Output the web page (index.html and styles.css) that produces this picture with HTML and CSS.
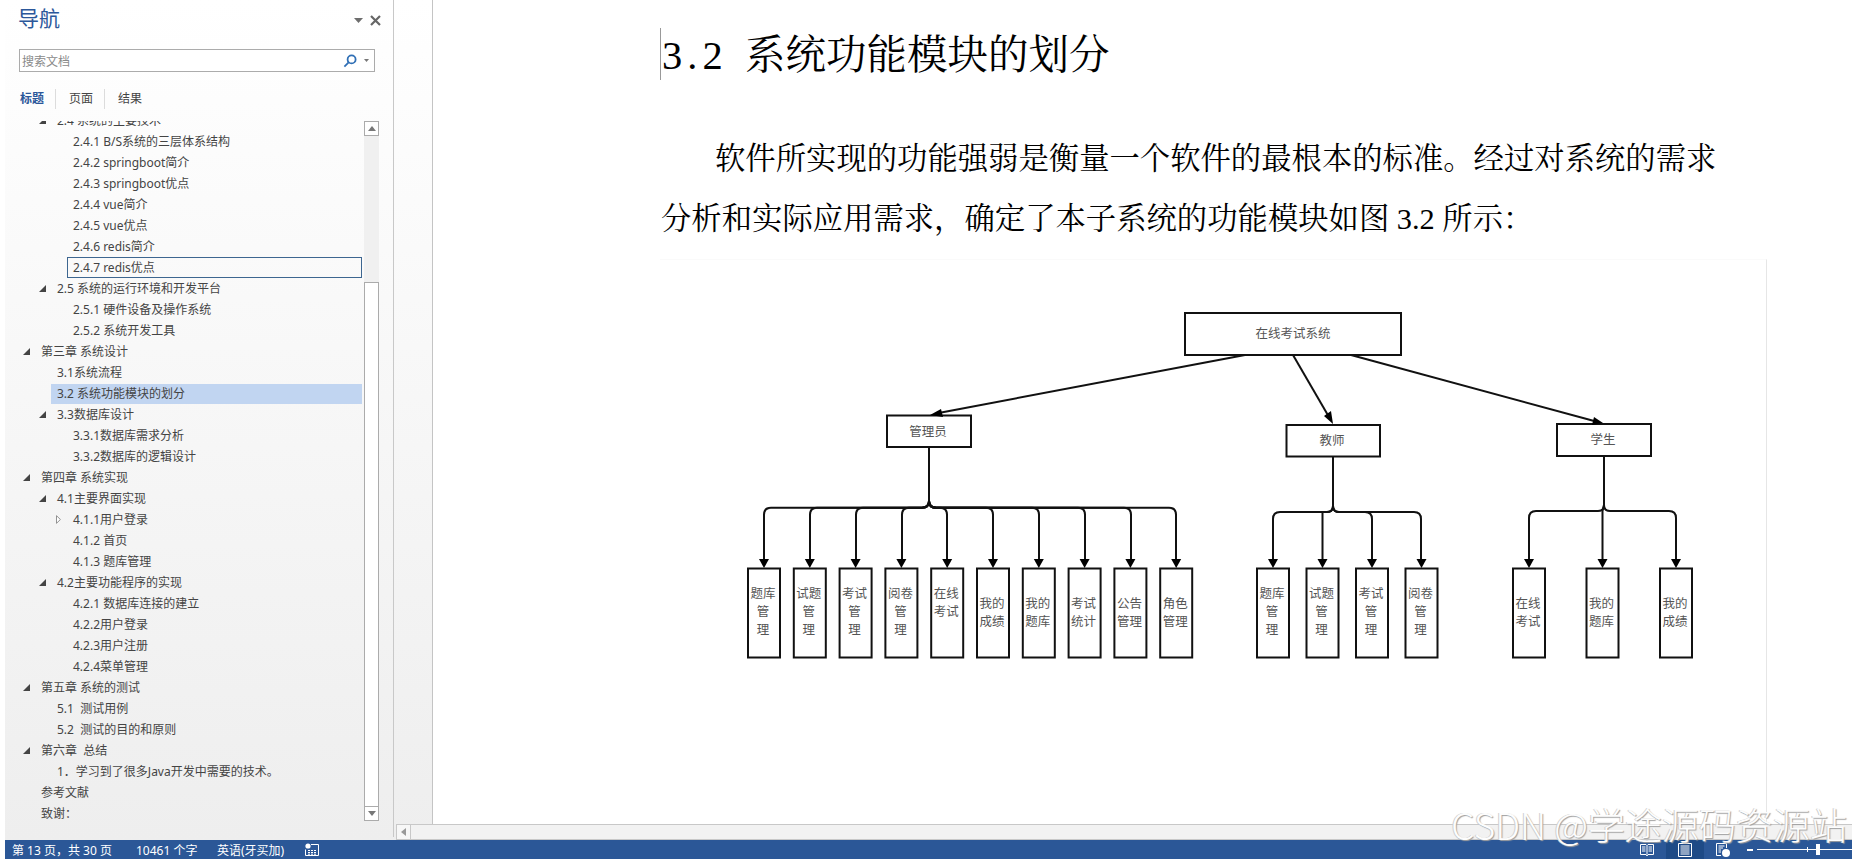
FILE: index.html
```html
<!DOCTYPE html>
<html lang="zh-CN">
<head>
<meta charset="utf-8">
<title>在线考试系统 - 文档</title>
<link rel="stylesheet" href="styles.css">
</head>
<body>
<div class="app">
  <div class="main">
    <aside class="nav">
      <header class="nav-head">
        <h2 class="nav-title">导航</h2>
        <div class="nav-actions">
          <svg class="ico-drop" viewBox="0 0 9 5"><path d="M0 0H9L4.5 5Z"/></svg>
          <svg class="ico-close" viewBox="0 0 11 11"><path d="M1 1L10 10M10 1L1 10"/></svg>
        </div>
      </header>
      <div class="search">
        <span class="search-text">搜索文档</span>
        <svg class="ico-search" viewBox="0 0 14 14"><circle cx="8.6" cy="5.4" r="4"/><path d="M5.6 8.4L1.4 12.6"/></svg>
        <svg class="ico-mini" viewBox="0 0 5 3"><path d="M0 0H5L2.5 3Z"/></svg>
      </div>
      <nav class="tabs">
        <span class="tab tab-on">标题</span>
        <span class="tab">页面</span>
        <span class="tab">结果</span>
      </nav>
      <div class="tree-area">
        <div class="tree">
          <div class="tree-list">
            <div class="row l2"><i class="tw open"></i><span class="label">2.4 系统的主要技术</span></div>
            <div class="row l3"><i class="tw"></i><span class="label">2.4.1 B/S系统的三层体系结构</span></div>
            <div class="row l3"><i class="tw"></i><span class="label">2.4.2 springboot简介</span></div>
            <div class="row l3"><i class="tw"></i><span class="label">2.4.3 springboot优点</span></div>
            <div class="row l3"><i class="tw"></i><span class="label">2.4.4 vue简介</span></div>
            <div class="row l3"><i class="tw"></i><span class="label">2.4.5 vue优点</span></div>
            <div class="row l3"><i class="tw"></i><span class="label">2.4.6 redis简介</span></div>
            <div class="row l3"><i class="tw"></i><span class="label focus">2.4.7 redis优点</span></div>
            <div class="row l2"><i class="tw open"></i><span class="label">2.5 系统的运行环境和开发平台</span></div>
            <div class="row l3"><i class="tw"></i><span class="label">2.5.1 硬件设备及操作系统</span></div>
            <div class="row l3"><i class="tw"></i><span class="label">2.5.2 系统开发工具</span></div>
            <div class="row l1"><i class="tw open"></i><span class="label">第三章 系统设计</span></div>
            <div class="row l2"><i class="tw"></i><span class="label">3.1系统流程</span></div>
            <div class="row l2"><i class="tw"></i><span class="label selected">3.2 系统功能模块的划分</span></div>
            <div class="row l2"><i class="tw open"></i><span class="label">3.3数据库设计</span></div>
            <div class="row l3"><i class="tw"></i><span class="label">3.3.1数据库需求分析</span></div>
            <div class="row l3"><i class="tw"></i><span class="label">3.3.2数据库的逻辑设计</span></div>
            <div class="row l1"><i class="tw open"></i><span class="label">第四章 系统实现</span></div>
            <div class="row l2"><i class="tw open"></i><span class="label">4.1主要界面实现</span></div>
            <div class="row l3"><svg class="tw-closed" viewBox="0 0 5 9"><path d="M.5 .7L4.4 4.5L.5 8.3Z"/></svg><span class="label">4.1.1用户登录</span></div>
            <div class="row l3"><i class="tw"></i><span class="label">4.1.2 首页</span></div>
            <div class="row l3"><i class="tw"></i><span class="label">4.1.3 题库管理</span></div>
            <div class="row l2"><i class="tw open"></i><span class="label">4.2主要功能程序的实现</span></div>
            <div class="row l3"><i class="tw"></i><span class="label">4.2.1 数据库连接的建立</span></div>
            <div class="row l3"><i class="tw"></i><span class="label">4.2.2用户登录</span></div>
            <div class="row l3"><i class="tw"></i><span class="label">4.2.3用户注册</span></div>
            <div class="row l3"><i class="tw"></i><span class="label">4.2.4菜单管理</span></div>
            <div class="row l1"><i class="tw open"></i><span class="label">第五章 系统的测试</span></div>
            <div class="row l2"><i class="tw"></i><span class="label">5.1&nbsp;&nbsp;测试用例</span></div>
            <div class="row l2"><i class="tw"></i><span class="label">5.2&nbsp;&nbsp;测试的目的和原则</span></div>
            <div class="row l1"><i class="tw open"></i><span class="label">第六章&nbsp;&nbsp;总结</span></div>
            <div class="row l2"><i class="tw"></i><span class="label">1．学习到了很多Java开发中需要的技术。</span></div>
            <div class="row l1"><i class="tw"></i><span class="label">参考文献</span></div>
            <div class="row l1"><i class="tw"></i><span class="label">致谢：</span></div>
          </div>
        </div>
        <div class="vscroll">
          <div class="sb-btn"><svg class="sb-arrow" viewBox="0 0 8 5"><path d="M0 5L4 0L8 5Z"/></svg></div>
          <div class="sb-track"></div>
          <div class="sb-thumb"></div>
          <div class="sb-btn"><svg class="sb-arrow" viewBox="0 0 8 5"><path d="M0 0L4 5L8 0Z"/></svg></div>
        </div>
      </div>
    </aside>
    <section class="workspace">
      <div class="doc-row">
        <div class="gutter"></div>
        <main class="page">
          <h1 class="doc-h"><span class="doc-num">3.2</span>系统功能模块的划分</h1>
          <p class="doc-p">软件所实现的功能强弱是衡量一个软件的最根本的标准。经过对系统的需求分析和实际应用需求，确定了本子系统的功能模块如图 3.2 所示：</p>
          <figure class="figure">
            <svg class="chart" viewBox="720 300 1000 380">
              <g class="box">
                <rect x="1185" y="312" width="216" height="42"/>
                <rect x="887" y="414.5" width="84" height="31.5"/>
                <rect x="1286.5" y="424" width="93.5" height="31.5"/>
                <rect x="1557" y="423" width="94" height="32"/>
                <rect x="748" y="567.5" width="32" height="89"/><rect x="793.8" y="567.5" width="32" height="89"/><rect x="839.6" y="567.5" width="32" height="89"/><rect x="885.4" y="567.5" width="32" height="89"/><rect x="931.2" y="567.5" width="32" height="89"/><rect x="977" y="567.5" width="32" height="89"/><rect x="1022.8" y="567.5" width="32" height="89"/><rect x="1068.6" y="567.5" width="32" height="89"/><rect x="1114.4" y="567.5" width="32" height="89"/><rect x="1160.2" y="567.5" width="32" height="89"/>
                <rect x="1257" y="567.5" width="32" height="89"/><rect x="1306.5" y="567.5" width="32" height="89"/><rect x="1356" y="567.5" width="32" height="89"/><rect x="1405.5" y="567.5" width="32" height="89"/>
                <rect x="1513" y="567.5" width="32" height="89"/><rect x="1586.5" y="567.5" width="32" height="89"/><rect x="1660" y="567.5" width="32" height="89"/>
              </g>
              <g class="link">
                <path d="M1245 354L936 412.5"/>
                <path d="M1293 354L1329 416"/>
                <path d="M1351 354L1596 420.5"/>
                <path d="M929 446V500q0 6.7 -7 6.7H771q-7 0 -7 7V559"/>
                <path d="M929 500q0 6.7 -7 6.7H817q-7 0 -7 7V559"/>
                <path d="M929 500q0 6.7 -7 6.7H863q-7 0 -7 7V559"/>
                <path d="M929 500q0 6.7 -7 6.7H909q-7 0 -7 7V559"/>
                <path d="M929 500q0 6.7 7 6.7H940q7 0 7 7V559"/>
                <path d="M929 500q0 6.7 7 6.7H986q7 0 7 7V559"/>
                <path d="M929 500q0 6.7 7 6.7H1032q7 0 7 7V559"/>
                <path d="M929 500q0 6.7 7 6.7H1078q7 0 7 7V559"/>
                <path d="M929 500q0 6.7 7 6.7H1124q7 0 7 7V559"/>
                <path d="M929 500q0 6.7 7 6.7H1169q7 0 7 7V559"/>
                <path d="M1333 455V505q0 6 -6 6H1280q-7 0 -7 7V559"/>
                <path d="M1333 505q0 6 -6 6H1322.5V559"/>
                <path d="M1333 505q0 6 6 6H1365q7 0 7 7V559"/>
                <path d="M1333 505q0 6 6 6H1414q7 0 7 7V559"/>
                <path d="M1604 455V504q0 6 -6 6H1536q-7 0 -7 7V559"/>
                <path d="M1604 504q-1.500 6 -1.500 6V559"/>
                <path d="M1604 504q0 6 6 6H1669q7 0 7 7V559"/>
              </g>
              <g class="head">
                <path d="M930 414L941 408L943 416Z"/>
                <path d="M1333 423L1324 415L1331 410Z"/>
                <path d="M1603 422L1594 416L1592 424Z"/>
                <path d="M764 567L759 558H769Z"/><path d="M809.800 567L804.800 558H814.800Z"/><path d="M855.600 567L850.600 558H860.600Z"/><path d="M901.400 567L896.400 558H906.400Z"/><path d="M947.200 567L942.200 558H952.200Z"/><path d="M993 567L988 558H998Z"/><path d="M1038.800 567L1033.800 558H1043.800Z"/><path d="M1084.600 567L1079.600 558H1089.600Z"/><path d="M1130.400 567L1125.400 558H1135.400Z"/><path d="M1176.200 567L1171.200 558H1181.200Z"/>
                <path d="M1273 567L1268 558H1278Z"/><path d="M1322.500 567L1317.500 558H1327.500Z"/><path d="M1372 567L1367 558H1377Z"/><path d="M1421.500 567L1416.500 558H1426.500Z"/>
                <path d="M1529 567L1524 558H1534Z"/><path d="M1602.500 567L1597.500 558H1607.500Z"/><path d="M1676 567L1671 558H1681Z"/>
              </g>
              <g class="node-text">
                <text x="1293" y="337">在线考试系统</text>
                <text x="928" y="434.500">管理员</text>
                <text x="1332" y="444">教师</text>
                <text x="1603" y="443">学生</text>
                <text x="763" y="597">题库</text><text x="763" y="615">管</text><text x="763" y="633">理</text>
                <text x="808.800" y="597">试题</text><text x="808.800" y="615">管</text><text x="808.800" y="633">理</text>
                <text x="854.600" y="597">考试</text><text x="854.600" y="615">管</text><text x="854.600" y="633">理</text>
                <text x="900.400" y="597">阅卷</text><text x="900.400" y="615">管</text><text x="900.400" y="633">理</text>
                <text x="946.200" y="597">在线</text><text x="946.200" y="615">考试</text>
                <text x="992" y="607">我的</text><text x="992" y="625">成绩</text>
                <text x="1037.800" y="607">我的</text><text x="1037.800" y="625">题库</text>
                <text x="1083.600" y="607">考试</text><text x="1083.600" y="625">统计</text>
                <text x="1129.400" y="607">公告</text><text x="1129.400" y="625">管理</text>
                <text x="1175.200" y="607">角色</text><text x="1175.200" y="625">管理</text>
                <text x="1272" y="597">题库</text><text x="1272" y="615">管</text><text x="1272" y="633">理</text>
                <text x="1321.500" y="597">试题</text><text x="1321.500" y="615">管</text><text x="1321.500" y="633">理</text>
                <text x="1371" y="597">考试</text><text x="1371" y="615">管</text><text x="1371" y="633">理</text>
                <text x="1420.500" y="597">阅卷</text><text x="1420.500" y="615">管</text><text x="1420.500" y="633">理</text>
                <text x="1528" y="607">在线</text><text x="1528" y="625">考试</text>
                <text x="1601.500" y="607">我的</text><text x="1601.500" y="625">题库</text>
                <text x="1675" y="607">我的</text><text x="1675" y="625">成绩</text>
              </g>
            </svg>
          </figure>
        </main>
      </div>
      <div class="hscroll">
        <div class="hs-btn"><svg class="hs-arrow" viewBox="0 0 5 8"><path d="M5 0L0 4L5 8Z"/></svg></div>
        <div class="hs-track"></div>
      </div>
    </section>
  </div>
  <footer class="status">
    <span class="st-item st-page">第 13 页，共 30 页</span>
    <span class="st-item st-words">10461 个字</span>
    <span class="st-item st-lang">英语(牙买加)</span>
    <svg class="st-macro" viewBox="0 0 14 13"><circle cx="3" cy="3" r="2.600" class="fill"/><path d="M6 1.500H13.500V12.500H.5V6.500" class="line"/><path d="M3 7.500H5M6 7.500H8M9 7.500H11M3 9.500H5M6 9.500H8M9 9.500H11M3 11.200H5M6 11.200H8M9 11.200H11" class="line"/></svg>
    <div class="st-right">
      <div class="view"><svg class="view-ico" viewBox="0 0 14 14"><path d="M.5 1.500H6L7 2.500L8 1.500H13.500V11.500H8L7 13L6 11.500H.5ZM7 2.500V11.500M2 4H5.500M2 6H5.500M2 8H5.500M8.500 4H12M8.500 6H12M8.500 8H12" class="line"/></svg></div>
      <div class="view view-on"><svg class="view-ico" viewBox="0 0 14 14"><path d="M.5 .5H13.500V13.500H.5ZM2.500 3H11.500M2.500 5H11.500M2.500 7H11.500M2.500 9H11.500M2.500 11H11.500" class="line"/></svg></div>
      <div class="view"><svg class="view-ico" viewBox="0 0 14 14"><path d="M.5 12.500V.5H10.500V5M2.500 3H8.500M2.500 5H7M2.500 7H5M2.500 9H5M.5 12.500H5" class="line"/><circle cx="10" cy="10" r="4" class="fill"/></svg></div>
      <div class="zoomer">
        <span class="z-minus"></span>
        <div class="z-line"><span class="z-tick"></span><span class="z-thumb"></span></div>
      </div>
    </div>
  </footer>
  <div class="watermark">CSDN @学途源码资源站</div>
</div>
</body>
</html>
```
FILE: styles.css
```css
* { box-sizing: border-box; }
html, body { margin: 0; padding: 0; height: 100%; overflow: hidden; background: #fff; }
body { font-family: "Noto Sans", "Noto Sans CJK SC", sans-serif; font-size: 12px; color: #444; }

.app { position: relative; width: 1852px; height: 859px; padding-left: 5px; display: flex; flex-direction: column; background: #fff; }
.main { flex: 1; min-height: 0; display: flex; background: linear-gradient(180deg, #fff 0, #fdfdfd 12%, #eee 100%); }

/* navigation pane */
.nav { width: 389px; display: flex; flex-direction: column; border-right: 1px solid #c8c8c8; margin-bottom: 3px; }
.nav-head { height: 49px; display: flex; justify-content: space-between; padding: 4px 12px 0 13px; }
.nav-title { margin: 0; font-size: 21px; line-height: 26px; font-weight: 400; color: #2b579a; font-family: "Noto Sans CJK SC", sans-serif; }
.nav-actions { display: flex; gap: 7px; align-items: flex-start; padding-top: 11px; }
.ico-drop { width: 9px; height: 5px; margin-top: 3px; fill: #6d6d6d; }
.ico-close { width: 11px; height: 11px; fill: none; stroke: #666; stroke-width: 2.200; }

.search { margin-left: 14px; width: 356px; height: 23px; border: 1px solid #ababab; background: #fff; display: flex; align-items: center; padding: 0 5px 0 2px; }
.search-text { flex: 1; color: #8a8a8a; font-size: 12px; }
.ico-search { width: 14px; height: 14px; fill: none; stroke: #2f6fb5; stroke-width: 1.800; margin-right: 7px; }
.ico-mini { width: 5px; height: 3px; fill: #777; }

.tabs { height: 49px; padding: 17px 0 0 15px; display: flex; }
.tab { height: 20px; line-height: 20px; padding: 0 11px 0 13px; border-left: 1px solid #dcdcdc; color: #444; font-size: 12px; }
.tab-on { border-left: 0; padding-left: 0; color: #2b579a; font-weight: 700; }

.tree-area { flex: 1; min-height: 0; display: flex; position: relative; }
.tree { width: 359px; overflow: hidden; }
.tree-list { margin-top: -11px; }
.row { height: 21px; display: flex; align-items: center; margin-right: 2px; }
.l1 { padding-left: 18px; }
.l2 { padding-left: 34px; }
.l3 { padding-left: 50px; }
.tw { width: 12px; flex: none; height: 7px; }
.tw.open { background: #444; clip-path: polygon(100% 0, 100% 100%, 0 100%); width: 7px; margin-right: 5px; }
.tw-closed { width: 5px; height: 9px; margin: 0 6px 0 1px; flex: none; fill: #fff; stroke: #777; stroke-width: .8; }
.label { flex: 1; height: 20px; line-height: 20px; padding-left: 6px; white-space: nowrap; color: #444; }
.l2 .selected { margin-left: 0; background: #c1d5f1; }
.focus { height: 21px; line-height: 19px; border: 1px solid #3d6690; padding-left: 5px; }

.vscroll { width: 15px; height: 700px; display: flex; flex-direction: column; }
.sb-btn { height: 15px; background: #fff; border: 1px solid #ababab; display: flex; align-items: center; justify-content: center; }
.sb-arrow { width: 8px; height: 5px; fill: #777; }
.sb-track { height: 146px; background: #f0f0f0; }
.sb-thumb { flex: 1; background: #fff; border: 1px solid #ababab; border-bottom: 0; }

/* document area */
.workspace { flex: 1; min-width: 0; display: flex; flex-direction: column; }
.doc-row { flex: 1; min-height: 0; display: flex; }
.gutter { width: 39px; border-right: 1px solid #c4c4c4; flex: none; }
.page { flex: 1; min-width: 0; background: #fff; padding: 28px 0 0 227px; overflow: hidden; }
.doc-h { margin: 0; height: 52px; line-height: 56px; font-size: 40.500px; font-weight: 400; color: #000; border-left: 1px solid #999; font-family: "Liberation Serif", "Noto Serif CJK SC", "Noto Sans CJK SC", serif; white-space: nowrap; }
.doc-num { display: inline-block; width: 84px; padding-left: 1px; letter-spacing: 5px; }
.doc-p { margin: 49px 0 0 1px; width: 1066px; line-height: 60px; font-size: 30.350px; text-indent: 54px; color: #000; font-family: "Liberation Serif", "Noto Serif CJK SC", "Noto Sans CJK SC", serif; }
.figure { margin: 10px 0 0 0; width: 1107px; height: 570px; padding: 41px 0 0 60px; border-right: 1px solid #e6e6e6; border-top: 1px solid #fafafa; }
.chart { display: block; width: 1000px; height: 380px; }
.box rect { fill: #fff; stroke: #111; stroke-width: 2; }
.link path { fill: none; stroke: #111; stroke-width: 2; }
.head path { fill: #000; }
.node-text text { font-family: "Noto Sans CJK SC", sans-serif; font-size: 12.500px; fill: #555; text-anchor: middle; }

.hscroll { height: 16px; margin: 0 0 0 2px; display: flex; background: #f2f2f2; border-top: 1px solid #c8c8c8; border-bottom: 1px solid #c8c8c8; }
.hs-btn { width: 15px; background: #f7f7f7; border-left: 1px solid #c8c8c8; border-right: 1px solid #c8c8c8; display: flex; align-items: center; justify-content: center; }
.hs-arrow { width: 5px; height: 8px; fill: #999; }
.hs-track { flex: 1; }

/* status bar */
.status { height: 19px; flex: none; background: #2b5797; color: #fff; display: flex; align-items: center; font-size: 12px; padding-left: 7px; }
.st-item { white-space: nowrap; }
.st-page { width: 124px; }
.st-words { width: 81px; }
.st-lang { width: 88px; }
.st-macro { width: 14px; height: 13px; flex: none; }
.fill { fill: #fff; }
.line { fill: none; stroke: #fff; stroke-width: 1; }
.st-right { margin-left: auto; display: flex; align-items: center; height: 100%; }
.view { width: 38px; height: 100%; display: flex; align-items: center; justify-content: center; }
.view-on { background: #1e4a86; }
.view-ico { width: 14px; height: 14px; }
.zoomer { width: 110px; display: flex; align-items: center; padding-left: 5px; }
.z-minus { width: 6px; height: 2px; background: #fff; margin-right: 4px; }
.z-line { position: relative; flex: 1; height: 1px; background: #fff; }
.z-tick { position: absolute; left: 50px; top: -2px; width: 1px; height: 5px; background: #fff; }
.z-thumb { position: absolute; left: 59px; top: -5px; width: 4px; height: 11px; background: #fff; }

.watermark { position: absolute; right: 5px; top: 801px; font-family: "Noto Sans CJK SC", sans-serif; font-size: 37px; line-height: 46px; font-weight: 300; color: #fdfdfd; text-shadow: 1px 1px 1px #a0a0a0, -1px 0 0 #cfcfcf; white-space: nowrap; }
```
